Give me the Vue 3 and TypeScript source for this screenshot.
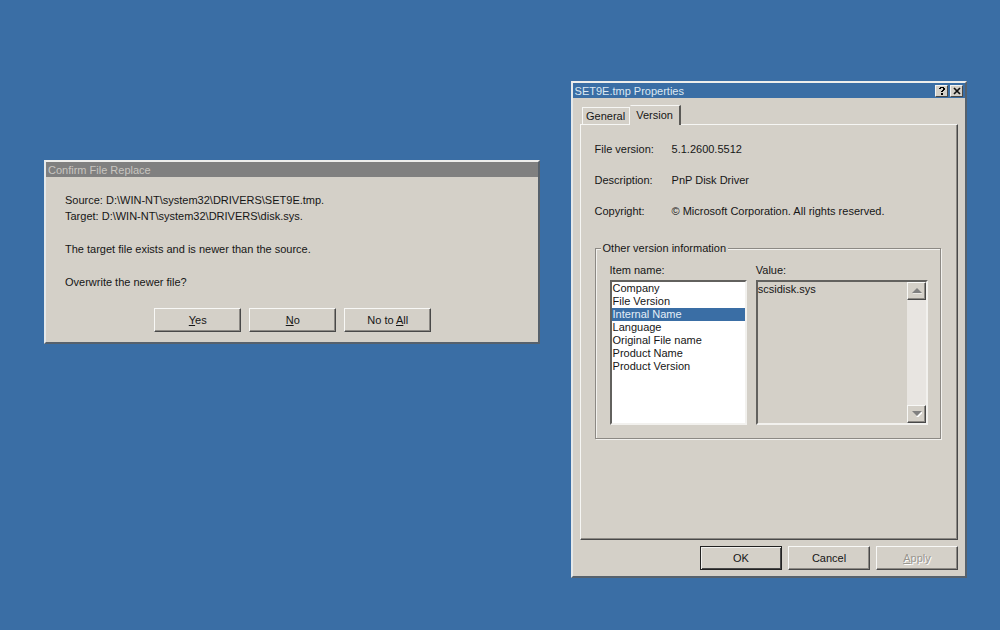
<script setup lang="ts">
import { ref, computed } from 'vue'

interface VersionItem {
  name: string
  value: string
}

const items: VersionItem[] = [
  { name: 'Company', value: '' },
  { name: 'File Version', value: '5.1.2600.5512' },
  { name: 'Internal Name', value: 'scsidisk.sys' },
  { name: 'Language', value: '' },
  { name: 'Original File name', value: '' },
  { name: 'Product Name', value: '' },
  { name: 'Product Version', value: '5.1.2600.5512' },
]

const details = [
  { label: 'File version:', value: '5.1.2600.5512' },
  { label: 'Description:', value: 'PnP Disk Driver' },
  { label: 'Copyright:', value: '© Microsoft Corporation. All rights reserved.' },
]

const selected = ref('Internal Name')
const selectedValue = computed(() => items.find((i) => i.name === selected.value)?.value ?? '')
</script>

<template>
  <main class="desktop">
    <section class="window confirm" role="dialog" aria-labelledby="confirm-title">
      <header class="titlebar inactive">
        <h2 id="confirm-title">Confirm File Replace</h2>
      </header>
      <div class="message">
        <p>Source: D:\WIN-NT\system32\DRIVERS\SET9E.tmp.<br>Target: D:\WIN-NT\system32\DRIVERS\disk.sys.</p>
        <p>The target file exists and is newer than the source.</p>
        <p>Overwrite the newer file?</p>
      </div>
      <div class="choices">
        <button type="button" class="btn"><span><u>Y</u>es</span></button>
        <button type="button" class="btn"><span><u>N</u>o</span></button>
        <button type="button" class="btn"><span>No to <u>A</u>ll</span></button>
      </div>
    </section>

    <section class="window properties" role="dialog" aria-labelledby="props-title">
      <header class="titlebar">
        <h2 id="props-title">SET9E.tmp Properties</h2>
        <button type="button" class="caption" aria-label="Help">
          <svg width="8" height="8" viewBox="0 0 8 8" shape-rendering="crispEdges">
            <path d="M2 0h4v1h1v2h-1v1h-1v1h-2v-1h1v-1h1v-2h-2v1h-2v-1h1zM3 6h2v2h-2z" />
          </svg>
        </button>
        <button type="button" class="caption" aria-label="Close">
          <svg width="8" height="8" viewBox="0 0 8 8">
            <path d="M1 1l6 6M7 1l-6 6" fill="none" stroke="#111" stroke-width="1.7" />
          </svg>
        </button>
      </header>

      <div class="content">
        <div class="tabs" role="tablist">
          <button type="button" class="tab" role="tab" aria-selected="false">General</button>
          <button type="button" class="tab active" role="tab" aria-selected="true">Version</button>
        </div>
        <div class="panel" role="tabpanel">
          <dl class="details">
            <div v-for="d in details" :key="d.label">
              <dt>{{ d.label }}</dt>
              <dd>{{ d.value }}</dd>
            </div>
          </dl>
          <fieldset class="group">
            <legend>Other version information</legend>
            <div class="names">
              <label for="item-name">Item name:</label>
              <select id="item-name" v-model="selected" class="list" size="10">
                <option v-for="i in items" :key="i.name" :value="i.name">{{ i.name }}</option>
              </select>
            </div>
            <div class="values">
              <label for="item-value">Value:</label>
              <div class="valuebox">
                <textarea id="item-value" readonly :value="selectedValue"></textarea>
                <div class="scrollbar">
                  <button type="button" class="arrow" aria-label="Scroll up">
                    <svg width="10" height="6" viewBox="0 0 10 6"><path d="M1 6L10 6" stroke="#fff" /><path d="M0 5L5 0L10 5z" fill="#808080" /></svg>
                  </button>
                  <button type="button" class="arrow" aria-label="Scroll down">
                    <svg width="10" height="6" viewBox="0 0 10 6"><path d="M5 6L10 1" stroke="#fff" stroke-width="2" /><path d="M0 0L5 5L10 0z" fill="#808080" /></svg>
                  </button>
                </div>
              </div>
            </div>
          </fieldset>
        </div>
        <footer class="actions">
          <button type="button" class="btn default"><span>OK</span></button>
          <button type="button" class="btn"><span>Cancel</span></button>
          <button type="button" class="btn" disabled><span><u>A</u>pply</span></button>
        </footer>
      </div>
    </section>
  </main>
</template>

<style>
html,
body {
  margin: 0;
  background: #3a6ea5;
}
</style>

<style scoped>
.desktop,
.desktop * {
  box-sizing: border-box;
}
.desktop {
  min-height: 100vh;
  padding: 81px 33px 52px 44px;
  display: flex;
  align-items: flex-start;
  gap: 31px;
  background: #3a6ea5;
  color: #161616;
  font: 11px/16px "Liberation Sans", Arial, sans-serif;
}
button,
select,
textarea {
  font: inherit;
  color: inherit;
  margin: 0;
  padding: 0;
  border-radius: 0;
  outline: none;
}
.window {
  min-width: 0;
  background: #d4d0c8;
  border: 2px solid;
  border-color: #eeeeec #56616c #56616c #e4e8ea;
}
.confirm {
  flex: 496 1 0;
  margin-top: 79px;
  padding-bottom: 10px;
}
.properties {
  flex: 396 1 0;
}
.titlebar {
  display: flex;
  align-items: center;
  gap: 2px;
  height: 15px;
  padding: 0 2px;
  background: #3a6ea5;
  color: #dce8f2;
}
.titlebar.inactive {
  background: #808080;
  color: #c9c6c0;
}
h2 {
  flex: 1;
  margin: 0;
  font: inherit;
}
.caption {
  display: flex;
  align-items: center;
  justify-content: center;
  width: 13px;
  height: 12px;
  background: #d4d0c8;
  border: 1px solid;
  border-color: #f4f4f2 #484848 #484848 #f4f4f2;
}
.message {
  display: grid;
  gap: 17px;
  padding: 15px 19px 18px;
}
p {
  margin: 0;
}
.choices {
  display: flex;
  justify-content: center;
  gap: 8px;
  padding-left: 2px;
}
.btn {
  height: 24px;
  background: #d4d0c8;
  border: 1px solid;
  border-color: #f8f8f6 #484848 #484848 #f8f8f6;
  box-shadow: inset -1px -1px #8c8984;
}
.choices .btn {
  width: 87px;
}
u {
  text-underline-offset: 1px;
}
.content {
  padding: 7px 7px 6px;
}
.tabs {
  display: flex;
  align-items: flex-end;
  padding-left: 2px;
}
.tab {
  width: 48px;
  height: 17px;
  background: #d4d0c8;
  border: 1px solid #f6f6f4;
  border-bottom: 0;
}
.tab.active {
  width: 51px;
  height: 20px;
  margin-bottom: -1px;
  padding-bottom: 1px;
  border-right: 2px solid #5a5956;
  border-left-color: #d4d0c8;
  z-index: 1;
}
.panel {
  padding: 16px 16px 100px 14px;
  border: 1px solid;
  border-color: #f6f6f4 #484848 #484848 #f6f6f4;
  box-shadow: inset -1px -1px #8c8984;
}
.details {
  display: grid;
  gap: 15px;
  margin: 0 0 21px;
}
.details div {
  display: flex;
}
dt {
  width: 77px;
}
dd {
  margin: 0;
}
.group {
  display: flex;
  gap: 9px;
  margin: 0;
  min-width: 0;
  padding: 6px 12px 13px 14px;
  border: 1px solid #8c8984;
  box-shadow: inset 1px 1px #f2f1ee, 1px 1px #f2f1ee;
}
legend {
  margin-left: -9px;
  padding: 0 2px;
  background: #d4d0c8;
}
.names {
  flex: 137 1 0;
  min-width: 0;
}
.values {
  flex: 172 1 0;
  min-width: 0;
}
label {
  display: block;
  margin-bottom: 2px;
}
.list,
.valuebox {
  width: 100%;
  height: 145px;
  border: 2px solid;
  border-color: #62615e #f2f1ee #f2f1ee #62615e;
}
.list {
  display: block;
  padding: 0;
  overflow: hidden;
  background: #fff;
}
option {
  min-height: 13px;
  height: 13px;
  padding: 0 1px;
  line-height: 13px;
  color: #161616;
}
option:checked {
  background: #3a6ea5 linear-gradient(#3a6ea5, #3a6ea5);
  color: #e4eef8;
}
.valuebox {
  display: flex;
}
textarea {
  flex: 1;
  min-width: 0;
  resize: none;
  border: 0;
  background: transparent;
  line-height: 14px;
  overflow: hidden;
}
.scrollbar {
  display: flex;
  flex-direction: column;
  justify-content: space-between;
  width: 19px;
  background: #e8e5e1;
}
.arrow {
  display: flex;
  align-items: center;
  justify-content: center;
  height: 18px;
  background: #d4d0c8;
  border: 1px solid;
  border-color: #f8f8f6 #484848 #484848 #f8f8f6;
  box-shadow: inset -1px -1px #8c8984;
}
.actions {
  display: flex;
  justify-content: flex-end;
  gap: 6px;
  margin-top: 6px;
}
.actions .btn {
  width: 82px;
}
.btn.default {
  border-color: #222;
  box-shadow: inset 1px 1px #f2f1ee, inset -1px -1px #484848;
}
.btn:disabled {
  color: #99968f;
  text-shadow: 1px 1px #fff;
}
</style>
